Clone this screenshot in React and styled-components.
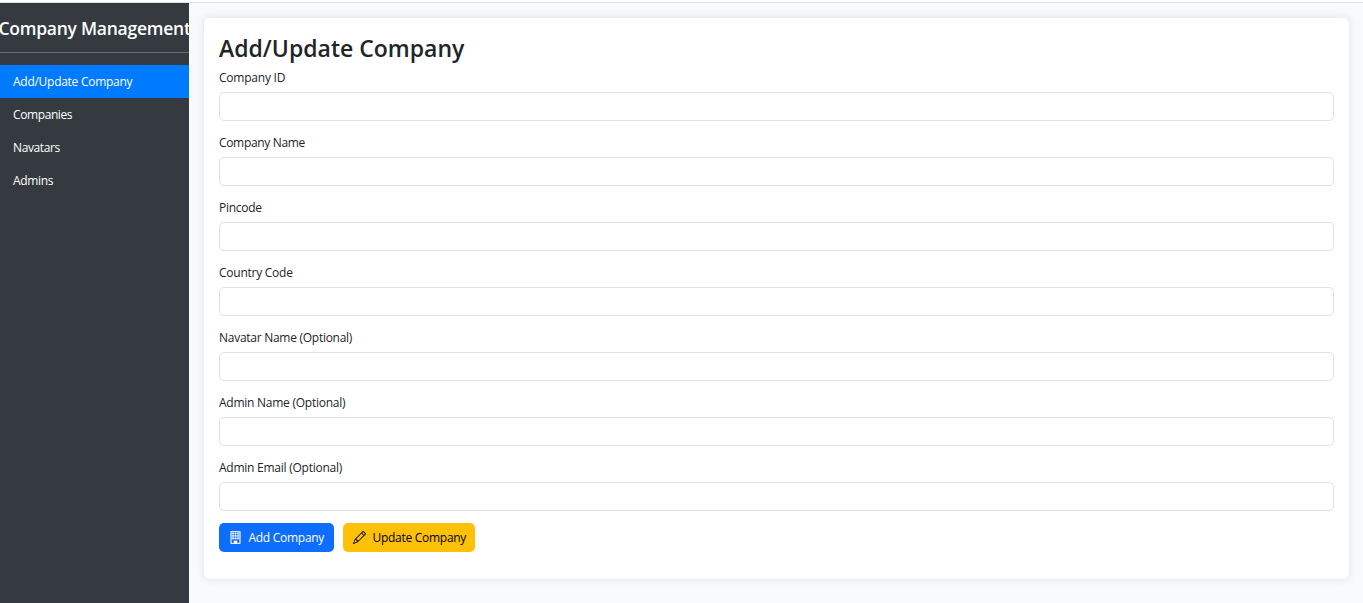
import React from "react";
import styled, { createGlobalStyle } from "styled-components";
import { BsBuilding, BsPencil } from "react-icons/bs";

const GlobalStyle = createGlobalStyle`
  *, *::before, *::after { box-sizing: border-box; }
  body {
    margin: 0;
    background: #fff;
    color: #212529;
    font-family: "Segoe UI", "Open Sans", "Noto Sans", sans-serif;
    font-size: 12px;
    line-height: 19px;
    overflow: hidden;
  }
`;

const Page = styled.div`
  height: 603px;
  padding-top: 2px;
  display: flex;
  flex-direction: column;
`;

const TopRule = styled.div`
  height: 1px;
  flex: none;
  background: #dee2e6;
`;

const Body = styled.div`
  flex: 1;
  min-height: 0;
  display: flex;
  background: #f8f9fa;
`;

const Sidebar = styled.aside`
  width: 189px;
  flex: none;
  background: #343a40;
  color: #fff;
`;

const Brand = styled.h4`
  margin: 0 0 12px;
  height: 50px;
  padding-top: 14px;
  display: flex;
  justify-content: center;
  border-bottom: 1px solid #6c6f72;
  font-size: 17.5px;
  line-height: 23px;
  font-weight: 600;
  letter-spacing: -0.25px;
  white-space: nowrap;
`;

const NavLink = styled.a`
  display: block;
  height: 33px;
  padding: 7px 13px;
  color: #fff;
  background: ${(p) => (p.$active ? "#007bff" : "transparent")};
  letter-spacing: ${(p) => p.$spacing || 0}px;
`;

const Main = styled.main`
  flex: 1;
  padding: 15px 14px 24px 15px;
`;

const Card = styled.form`
  height: 561px;
  padding: 16px 15px;
  background: #fff;
  border-radius: 6px;
  box-shadow: 0 0 8px rgba(0, 0, 0, 0.1);
`;

const Title = styled.h2`
  margin: 0 0 5px;
  font-size: 23px;
  line-height: 29px;
  font-weight: 600;
  letter-spacing: 0px;
`;

const Field = styled.div`
  margin-bottom: 12px;
`;

const Label = styled.label`
  display: block;
  height: 19px;
  margin-bottom: 5px;
  letter-spacing: ${(p) => p.$spacing || 0}px;
`;

const Input = styled.input`
  display: block;
  width: 100%;
  height: 29px;
  padding: 4px 9px;
  border: 1px solid #dee2e6;
  border-radius: 5px;
  background: #fff;
  font: inherit;
  outline: none;
`;

const Actions = styled.div`
  display: flex;
  gap: 9px;
`;

const Button = styled.button`
  width: ${(p) => p.$width}px;
  height: 29px;
  padding: 0 0 0 10px;
  display: flex;
  align-items: center;
  gap: 6.5px;
  border: 0;
  border-radius: 5px;
  background: ${(p) => (p.$warning ? "#ffc107" : "#0d6efd")};
  color: ${(p) => (p.$warning ? "#000" : "#fff")};
  font: inherit;
  letter-spacing: -0.28px;
  white-space: nowrap;

  svg {
    width: 13px;
    height: 13px;
    flex: none;
    stroke-width: ${(p) => (p.$warning ? 0 : 0.4)};
  }
`;

const links = [
  { text: "Add/Update Company", active: true, spacing: -0.27 },
  { text: "Companies", spacing: -0.4 },
  { text: "Navatars", spacing: -0.38 },
  { text: "Admins", spacing: -0.33 },
];

const fields = [
  { text: "Company ID", spacing: -0.22 },
  { text: "Company Name", spacing: -0.33 },
  { text: "Pincode", spacing: -0.28 },
  { text: "Country Code", spacing: -0.25 },
  { text: "Navatar Name (Optional)", spacing: -0.27 },
  { text: "Admin Name (Optional)", spacing: -0.25 },
  { text: "Admin Email (Optional)", spacing: -0.25 },
];

export default function App() {
  return (
    <>
      <GlobalStyle />
      <Page>
        <TopRule />
        <Body>
          <Sidebar>
            <Brand>Company Management</Brand>
            <nav>
              {links.map((l) => (
                <NavLink key={l.text} $active={l.active} $spacing={l.spacing}>
                  {l.text}
                </NavLink>
              ))}
            </nav>
          </Sidebar>
          <Main>
            <Card>
              <Title>Add/Update Company</Title>
              {fields.map((f, i) => (
                <Field key={f.text}>
                  <Label htmlFor={`field-${i}`} $spacing={f.spacing}>
                    {f.text}
                  </Label>
                  <Input id={`field-${i}`} />
                </Field>
              ))}
              <Actions>
                <Button type="button" $width={115}>
                  <BsBuilding />
                  <span>Add Company</span>
                </Button>
                <Button type="button" $width={132} $warning>
                  <BsPencil />
                  <span>Update Company</span>
                </Button>
              </Actions>
            </Card>
          </Main>
        </Body>
      </Page>
    </>
  );
}
